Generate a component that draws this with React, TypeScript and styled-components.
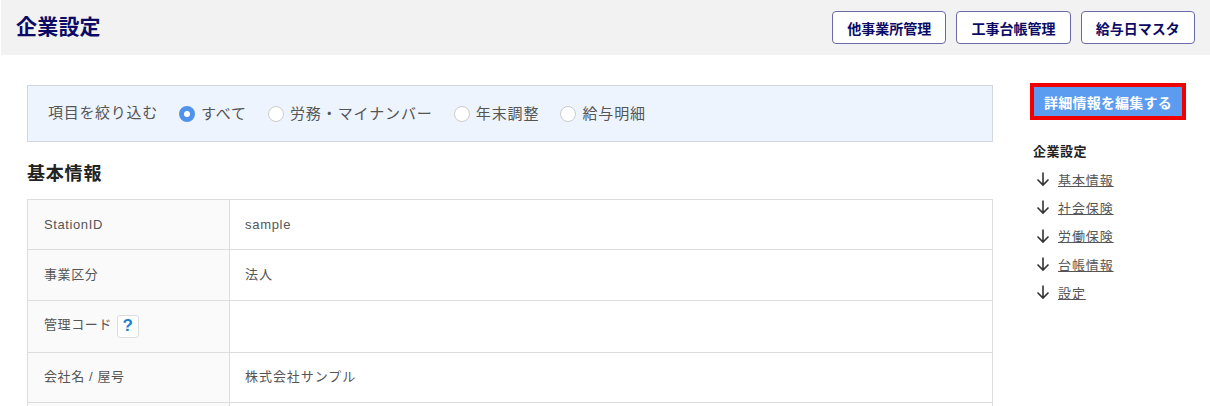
import React from 'react';
import styled, { createGlobalStyle } from 'styled-components';

const GlobalStyle = createGlobalStyle`
  html, body {
    margin: 0;
    padding: 0;
    height: 406px;
    overflow: hidden;
    background: #fff;
    font-family: "Liberation Sans", "Noto Sans CJK JP", sans-serif;
    color: #444;
  }
`;

const Page = styled.div`
  width: 1210px;
  height: 406px;
  overflow: hidden;
`;

const Header = styled.header`
  display: flex;
  align-items: center;
  justify-content: space-between;
  height: 55px;
  margin-left: 1px;
  padding: 0 15px;
  background: #f2f2f2;
`;

const PageTitle = styled.h1`
  margin: 0 0 2px;
  font-size: 21px;
  font-weight: 700;
  letter-spacing: 0.2px;
  line-height: 1;
  color: #0b0b66;
`;

const HeaderActions = styled.div`
  display: flex;
  gap: 10px;
`;

const HeaderButton = styled.button`
  width: 114.3px;
  height: 33px;
  padding: 0;
  font-family: inherit;
  font-size: 14px;
  font-weight: 700;
  color: #0b0b66;
  background: #fff;
  border: 1px solid #6a6aa8;
  border-radius: 4px;
`;

const Body = styled.div`
  display: flex;
  padding-left: 27px;
`;

const Main = styled.main`
  width: 966px;
  padding-top: 30px;
`;

const FilterPanel = styled.div`
  display: flex;
  align-items: center;
  box-sizing: border-box;
  height: 57px;
  padding: 0 0 2px 20px;
  background: #edf4fe;
  border: 1px solid #d2d7e0;
`;

const FilterLabel = styled.span`
  margin: 0 21px 2px 0;
  font-size: 15px;
  letter-spacing: 0.7px;
  color: #555;
`;

const RadioOption = styled.label`
  display: flex;
  align-items: center;
  gap: 6px;
  margin-right: 21px;
  font-size: 15px;
  letter-spacing: 0.9px;
  color: #555;
`;

const RadioMark = styled.span<{ $checked?: boolean }>`
  box-sizing: border-box;
  width: 16px;
  height: 16px;
  margin-top: 2px;
  border-radius: 50%;
  background: #fff;
  border: ${p => (p.$checked ? '5px solid #4f93ec' : '1px solid #ccc')};
`;

const SectionTitle = styled.h2`
  margin: 20px 0 13px;
  font-size: 18px;
  font-weight: 700;
  letter-spacing: 0.8px;
  line-height: 24px;
  color: #222;
`;

const InfoTable = styled.table`
  width: 966px;
  border-collapse: collapse;
  table-layout: fixed;
  font-size: 13px;
  color: #555;
`;

const Row = styled.tr<{ $height: number; $lift: number }>`
  height: ${p => p.$height}px;

  th, td {
    padding-bottom: ${p => p.$lift}px;
  }
`;

const HeadCell = styled.th`
  box-sizing: border-box;
  width: 202px;
  padding-left: 16px;
  font-weight: 400;
  text-align: left;
  letter-spacing: 0.6px;
  background: #fafafa;
  border: 1px solid #ddd;
`;

const ValueCell = styled.td<{ $latin?: boolean }>`
  padding-left: 15px;
  border: 1px solid #ddd;
  letter-spacing: ${p => (p.$latin ? 0.7 : 0.95)}px;
`;

const HelpBadge = styled.span`
  display: inline-flex;
  align-items: center;
  justify-content: center;
  box-sizing: border-box;
  width: 22px;
  height: 23px;
  margin-left: 5px;
  vertical-align: middle;
  font-size: 17px;
  font-weight: 700;
  color: #1b7fd6;
  background: #fff;
  border: 1px solid #ddd;
  border-radius: 3px;
`;

const Aside = styled.aside`
  width: 156px;
  margin-left: 37px;
  padding-top: 28px;
`;

const EditButton = styled.button`
  box-sizing: border-box;
  width: 156px;
  height: 37px;
  padding: 0;
  font-family: inherit;
  font-size: 14px;
  font-weight: 700;
  letter-spacing: 0.2px;
  color: #fff;
  background: #5b9bf0;
  border: 4px solid #f00000;
`;

const NavTitle = styled.div`
  margin: 23px 0 0 3px;
  font-size: 13px;
  font-weight: 700;
  letter-spacing: 0.5px;
  line-height: 18px;
  color: #222;
`;

const NavList = styled.ul`
  margin: 4px 0 0 5px;
  padding: 0;
  list-style: none;
`;

const NavItem = styled.li`
  display: flex;
  align-items: center;
  gap: 7px;
  height: 28.3px;
  font-size: 13px;
  letter-spacing: 0.9px;
`;

const NavLink = styled.a`
  color: #555;
  text-decoration: underline;
`;

const ArrowDown = () => (
  <svg width="16" height="16" viewBox="0 0 16 16" fill="none" stroke="#333" strokeWidth="1.6">
    <path d="M8 1.5V14M2.5 8.5L8 14l5.5-5.5" />
  </svg>
);

const filters = ['すべて', '労務・マイナンバー', '年末調整', '給与明細'];
const navLinks = ['基本情報', '社会保険', '労働保険', '台帳情報', '設定'];

export default function App() {
  return (
    <Page>
      <GlobalStyle />
      <Header>
        <PageTitle>企業設定</PageTitle>
        <HeaderActions>
          <HeaderButton>他事業所管理</HeaderButton>
          <HeaderButton>工事台帳管理</HeaderButton>
          <HeaderButton>給与日マスタ</HeaderButton>
        </HeaderActions>
      </Header>
      <Body>
        <Main>
          <FilterPanel>
            <FilterLabel>項目を絞り込む</FilterLabel>
            {filters.map((label, i) => (
              <RadioOption key={label}>
                <RadioMark $checked={i === 0} />
                {label}
              </RadioOption>
            ))}
          </FilterPanel>
          <SectionTitle>基本情報</SectionTitle>
          <InfoTable>
            <tbody>
              <Row $height={50} $lift={1}>
                <HeadCell>StationID</HeadCell>
                <ValueCell $latin>sample</ValueCell>
              </Row>
              <Row $height={51} $lift={4}>
                <HeadCell>事業区分</HeadCell>
                <ValueCell>法人</ValueCell>
              </Row>
              <Row $height={52} $lift={2}>
                <HeadCell>
                  管理コード<HelpBadge>?</HelpBadge>
                </HeadCell>
                <ValueCell />
              </Row>
              <Row $height={50} $lift={6}>
                <HeadCell>会社名 / 屋号</HeadCell>
                <ValueCell>株式会社サンプル</ValueCell>
              </Row>
              <Row $height={50} $lift={0}>
                <HeadCell>&nbsp;</HeadCell>
                <ValueCell />
              </Row>
            </tbody>
          </InfoTable>
        </Main>
        <Aside>
          <EditButton>詳細情報を編集する</EditButton>
          <NavTitle>企業設定</NavTitle>
          <NavList>
            {navLinks.map(label => (
              <NavItem key={label}>
                <ArrowDown />
                <NavLink>{label}</NavLink>
              </NavItem>
            ))}
          </NavList>
        </Aside>
      </Body>
    </Page>
  );
}
